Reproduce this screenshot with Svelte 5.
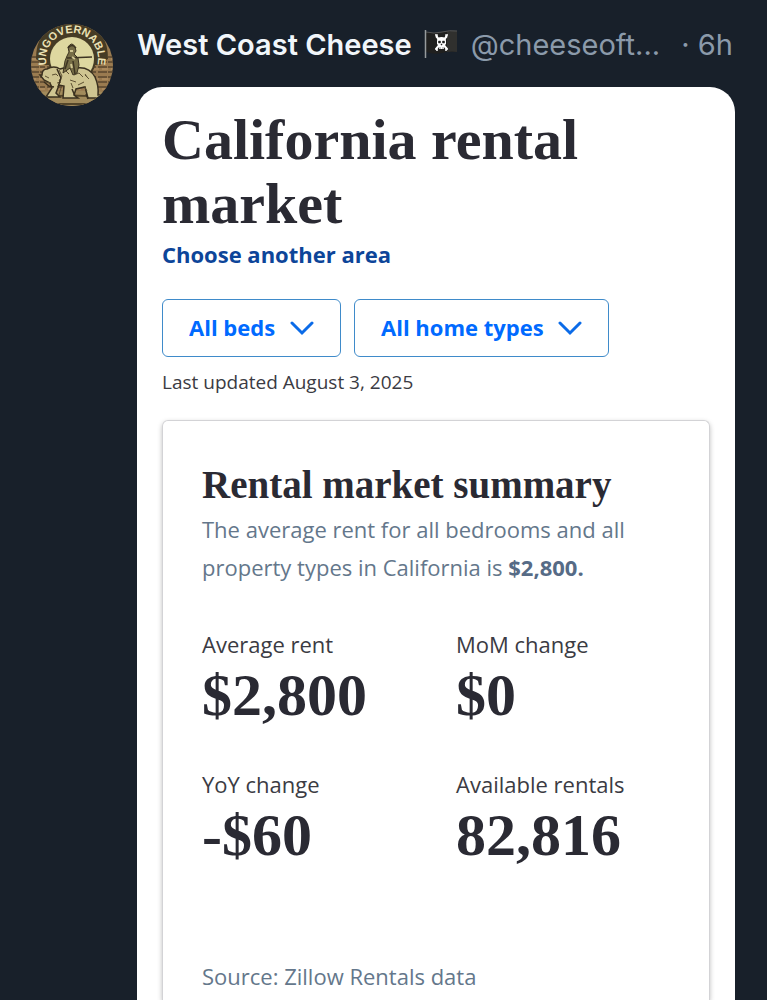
<script>
  const filters = [
    { id: 'beds', name: 'Bedrooms', value: 'All beds' },
    { id: 'homes', name: 'Home types', value: 'All home types' }
  ];
  const stats = [
    { label: 'Average rent', value: '$2,800' },
    { label: 'MoM change', value: '$0' },
    { label: 'YoY change', value: '-$60' },
    { label: 'Available rentals', value: '82,816' }
  ];
</script>

<article class="post">
  <a class="avatar" href="#profile" aria-label="West Coast Cheese">
    <svg viewBox="0 0 84 84" aria-hidden="true">
      <defs>
        <clipPath id="round"><circle cx="42" cy="42" r="41" /></clipPath>
        <path id="arc" d="M17 43A26 26 0 1 1 67 43" />
      </defs>
      <g clip-path="url(#round)">
        <rect width="84" height="84" fill="#9a7b50" />
        <path d="M0 34H84M0 39H84M0 44H84M0 49H84M0 54H84M0 59H84M0 64H84" stroke="#59472e" stroke-width="1.500" stroke-dasharray="9 1 5 2" />
        <path d="M0 36H84M0 46H84M0 56H84M0 66H84" stroke="#b99769" stroke-width="1" stroke-dasharray="6 3" />
        <path d="M6 36Q6 0 42 0T78 36L70 42H14Z" fill="#463c25" />
        <circle cx="42" cy="36" r="24" fill="#463c25" />
        <circle cx="42" cy="36" r="22" fill="#ded8a0" />
        <path d="M0 70q42-5 84 0v14H0Z" fill="#a28b5b" />
        <path d="M4 75q38-5 76 0M20 81h44" stroke="#554629" stroke-width="2" fill="none" />
        <path d="M12 52q0-6 5-6 7-4 13 0 8-3 16-1 13-2 19 9 4 9 3 18h3v3H58l-3-11-9 2-2 6 4 3H33l1-12-5-1-3 8 4 4H16l6-9-2-5-6-3-4-5Z" fill="#cfc591" stroke="#3a301f" stroke-width="1.500" />
        <path d="M15 53l4 2m3-3 4-1m-11 8 6 1m8-13 3 6-3 5m7-10 3 3m5 1 5-2m-9 7 6 2m3-9 4 4m-5 8 6-3m3 9-3-5m-23 2-2 7m26-20 4 4m-18 4 2 5m-16-5 4-1m24-8 2 3m-31-3 2 2" stroke="#5d5033" stroke-width="1" fill="none" />
        <path d="M14 59l5 4 5 1m3-18 4 9-3 9m28 7 2 5M42 66l3 7" stroke="#3a301f" stroke-width="1.500" fill="none" />
        <path d="M38 24q4-6 7 0l1 4-2 3 4 4 1 7-2 8-4 2-3-7-7 5 2-12 2-5 2-4Z" fill="#776e47" stroke="#3d3422" stroke-width="1" />
        <path d="M38 25q4-5 8 0M37 35l25-1M43 38l2 13M38 37l-3 9" stroke="#3d3422" stroke-width="1.500" fill="none" />
        <path d="M40 28h3M42 34l3 2M41 41l1 4" stroke="#cfc591" stroke-width="2" />
        <text><textPath href="#arc" startOffset="50%" text-anchor="middle">UNGOVERNABLE</textPath></text>
      </g>
    </svg>
  </a>

  <div class="body">
    <header>
      <strong>West Coast Cheese</strong>
      <svg class="flag" viewBox="0 0 34 30" aria-hidden="true">
        <path d="M2 3Q10 5 18 3T33 2V23Q25 22 18 24T2 23Z" fill="#20201f" />
        <path d="M23 3Q29 1 33 2V23Q28 22 23 23Z" fill="#30302e" />
        <path d="M2 3Q10 5 18 3T33 2" fill="none" stroke="#555" />
        <path d="M1.500 1V29" stroke="#969b9d" stroke-width="1.500" />
        <path d="M12 7l11 13M23 7 12 20" stroke="#fff" stroke-width="2" />
        <path d="M11 6h2v2M24 6h-2v2M11 20h2v2M24 20h-2v2" stroke="#fff" stroke-width="1.500" fill="none" />
        <path d="M13 12q0-4 4.500-4t4.500 4v3l-2 2v3h-5v-3l-2-2Z" fill="#fff" />
        <path d="M14.500 12h2v2h-2Zm4 0h2v2h-2ZM17 15h1v1h-1Zm-1 3v2m3-2v2" fill="#222" stroke="#222" stroke-width=".5" />
      </svg>
      <span class="handle">@cheeseoft...</span>
      <span class="time">· 6h</span>
    </header>

    <section class="sheet">
      <h1>California rental market</h1>
      <a class="area" href="#area">Choose another area</a>
      <div class="filters">
        {#each filters as filter}
          <div class="filter">
            <select id={filter.id} aria-label={filter.name}>
              <option>{filter.value}</option>
            </select>
            <svg viewBox="0 0 24 16" aria-hidden="true"><path d="M2 3 12 13 22 3" /></svg>
          </div>
        {/each}
      </div>
      <p class="updated">Last updated August 3, 2025</p>

      <section class="panel">
        <h2>Rental market summary</h2>
        <p class="summary">The average rent for all bedrooms and all property types in California is <b>$2,800.</b></p>
        <dl>
          {#each stats as stat}
            <div>
              <dt>{stat.label}</dt>
              <dd>{stat.value}</dd>
            </div>
          {/each}
        </dl>
        <p class="source">Source: Zillow Rentals data</p>
      </section>
    </section>
  </div>
</article>

<style>
  :global(body) { margin: 0; background: #18202a; }
  * { box-sizing: border-box; }
  h1, h2, p, dl, dd { margin: 0; }
  .post {
    display: flex;
    gap: 23px;
    min-height: 100vh;
    padding: 23px 32px 0 30px;
    font-family: "Open Sans", "Noto Sans", sans-serif;
    font-size: 22px;
    color: #3b3b43;
  }
  .avatar { flex: none; width: 84px; height: 84px; }
  .avatar svg { display: block; width: 100%; }
  .avatar text { font: bold 11px "Liberation Sans Narrow", "Liberation Sans", sans-serif; fill: #ece2b6; }
  .body { flex: 1; min-width: 0; display: flex; flex-direction: column; }
  header {
    display: flex;
    align-items: center;
    height: 42px;
    margin-bottom: 22px;
    padding-right: 2px;
    font-family: Inter, sans-serif;
    font-size: 29px;
    white-space: nowrap;
    color: #8b9aaa;
  }
  header strong { font-weight: 600; color: #f1f6fa; }
  .flag { flex: none; width: 34px; height: 30px; margin: 0 13px 0 12px; }
  .time { margin-left: auto; }
  .sheet {
    flex: 1;
    display: flex;
    flex-direction: column;
    align-items: flex-start;
    padding: 21px 25px 0;
    border-radius: 25px 25px 0 0;
    background: #fff;
  }
  h1, h2, dd { font-family: "Liberation Serif", serif; font-weight: 700; color: #2a2a33; }
  h1 { font-size: 58px; line-height: 64px; }
  .area { margin-top: 2px; line-height: 32px; font-weight: 700; color: #0d4599; text-decoration: none; }
  .filters { display: flex; flex-wrap: wrap; gap: 13px; margin-top: 29px; }
  .filter { position: relative; }
  select {
    appearance: none;
    height: 58px;
    padding: 0 64px 2px 26px;
    border: 1px solid #3f8bca;
    border-radius: 6px;
    background: #fff;
    color: #006aff;
    font: 700 22px "Open Sans", sans-serif;
  }
  .filter svg { position: absolute; right: 27px; top: 21px; width: 24px; height: 16px; pointer-events: none; }
  .filter path { fill: none; stroke: #0b6be8; stroke-width: 3; stroke-linecap: round; }
  .updated { margin-top: 11px; font-size: 19px; line-height: 28px; }
  .panel {
    flex: 1;
    align-self: stretch;
    margin-top: 24px;
    padding: 40px 39px 6px;
    border: 1px solid #d3d3d6;
    border-bottom: 0;
    border-radius: 6px 6px 0 0;
    box-shadow: 0 2px 5px rgb(0 0 0 / 25%);
  }
  h2 { font-size: 39px; line-height: 48px; }
  .summary { margin-top: 1px; line-height: 38px; color: #64778b; }
  .summary b { color: #566b86; }
  dl { display: grid; grid-template-columns: 254px 1fr; row-gap: 41px; margin-top: 42px; }
  dt { line-height: 32px; }
  dd { margin-top: 3px; font-size: 60px; line-height: 64px; }
  .source { margin-top: 93px; line-height: 32px; color: #64778b; }
</style>
